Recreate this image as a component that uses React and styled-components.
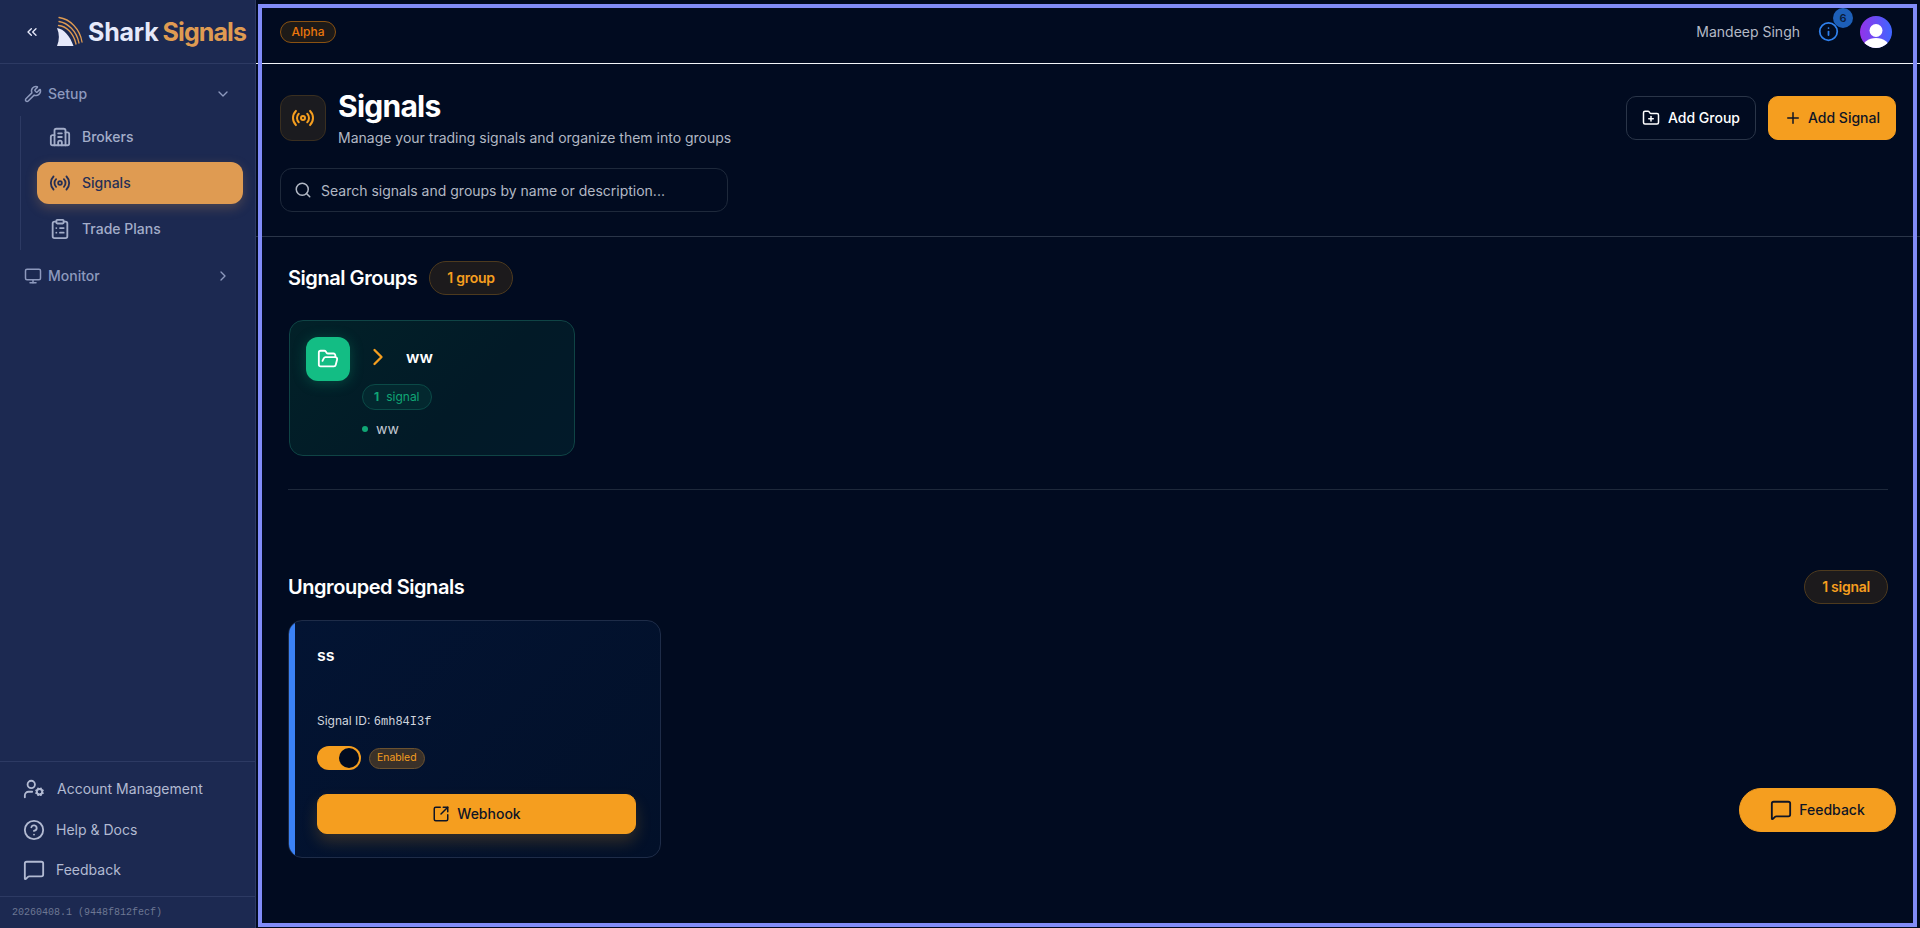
import styled, { createGlobalStyle } from "styled-components";
import {
  Building2,
  ChevronDown,
  ChevronRight,
  ChevronsLeft,
  CircleHelp,
  ClipboardList,
  FolderOpen,
  FolderPlus,
  Info,
  MessageSquare,
  Monitor,
  Plus,
  Radio,
  Search,
  SquareArrowOutUpRight,
  UserCog,
  Wrench,
} from "lucide-react";

const GlobalStyle = createGlobalStyle`
  * { box-sizing: border-box; }
  html, body { margin: 0; height: 100%; }
  body {
    background: #1c2951;
    font-family: Inter, "Liberation Sans", sans-serif;
    line-height: 20px;
    overflow: hidden;
  }
`;

const Shell = styled.div`
  display: flex;
  height: 928px;
  width: 1920px;
  position: relative;
`;

const Sidebar = styled.aside`
  width: 256px;
  flex: none;
  display: flex;
  flex-direction: column;
  background: #1c2951;
  border-right: 1px solid #2d3a63;
`;

const Brand = styled.div`
  height: 64px;
  flex: none;
  display: flex;
  align-items: center;
  padding-left: 24px;
  border-bottom: 1px solid #2d3a63;
  color: #e6e9fa;
  svg.collapse { margin-right: 16px; }
`;

const BrandName = styled.span`
  font-size: 25px;
  font-weight: 700;
  letter-spacing: -0.2px;
  margin-left: 4px;
  color: #e6e9fa;
  span { color: #df9b52; margin-left: 4px; letter-spacing: -0.9px; }
`;

const Nav = styled.nav`
  flex: 1;
  padding-top: 11px;
`;

const NavGroup = styled.div`
  height: 38px;
  display: flex;
  align-items: center;
  padding: 0 24px 0 24px;
  gap: 6px;
  color: #8d99bd;
  font-size: 14px;
  font-weight: 500;
  margin-top: ${(p) => p.$gap || 0}px;
  span { flex: 1; }
`;

const SubList = styled.div`
  margin: 3px 0 0 20px;
  padding: 0 12px 0 16px;
  border-left: 1px solid #2d3a63;
  height: 134px;
  display: flex;
  flex-direction: column;
  gap: 4px;
`;

const SubItem = styled.a`
  height: 42px;
  display: flex;
  align-items: center;
  gap: 11px;
  padding-left: 12px;
  border-radius: 12px;
  font-size: 14px;
  font-weight: 500;
  color: ${(p) => (p.$active ? "#262f55" : "#a3adc9")};
  background: ${(p) => (p.$active ? "#df9b52" : "transparent")};
  box-shadow: ${(p) => (p.$active ? "0 4px 12px rgba(223,155,82,.25)" : "none")};
`;

const FooterNav = styled.div`
  flex: none;
  height: 135px;
  border-top: 1px solid #2d3a63;
  padding-top: 7px;
  display: flex;
  flex-direction: column;
`;

const FooterItem = styled.a`
  height: 40.5px;
  display: flex;
  align-items: center;
  gap: ${(p) => p.$gap || 11}px;
  padding-left: 23px;
  font-size: 14px;
  color: #b2bad2;
`;

const Version = styled.div`
  flex: none;
  height: 32px;
  display: flex;
  align-items: center;
  padding-left: 12px;
  border-top: 1px solid #2d3a63;
  font-family: "Liberation Mono", monospace;
  font-size: 10px;
  color: #6d7793;
`;

const Main = styled.main`
  flex: 1;
  min-width: 0;
  background: #010b20;
  display: flex;
  flex-direction: column;
  position: relative;
`;

const FocusRing = styled.div`
  position: absolute;
  left: 2px;
  top: 4px;
  right: 3px;
  bottom: 1px;
  border: 4px solid #818cf8;
  pointer-events: none;
  z-index: 5;
`;

const TopBar = styled.header`
  height: 64px;
  flex: none;
  display: flex;
  align-items: center;
  justify-content: space-between;
  padding: 0 28px 0 24px;
  border-bottom: 1px solid #f2f4f8;
`;

const AlphaBadge = styled.span`
  font-size: 12px;
  font-weight: 500;
  color: #ea760c;
  padding: 0 10.5px;
  height: 22px;
  display: inline-flex;
  align-items: center;
  border-radius: 999px;
  border: 1px solid #8a5212;
  background: #1d1a18;
`;

const UserBox = styled.div`
  display: flex;
  align-items: center;
  color: #b4bac6;
  font-size: 14px;
`;

const InfoWrap = styled.div`
  position: relative;
  margin: 0 21px 0 18px;
  display: flex;
  color: #2f80ed;
`;

const CountDot = styled.span`
  position: absolute;
  right: -14px;
  top: -13px;
  width: 20px;
  height: 20px;
  border-radius: 50%;
  background: #1d5fb8;
  color: #0b1c3a;
  font-size: 11px;
  font-weight: 600;
  display: flex;
  align-items: center;
  justify-content: center;
`;

const PageHead = styled.section`
  flex: none;
  padding: 31px 24px 24px;
  border-bottom: 1px solid #2a3548;
`;

const HeadRow = styled.div`
  display: flex;
  justify-content: space-between;
  align-items: flex-start;
`;

const TitleBlock = styled.div`
  display: flex;
  gap: 12px;
`;

const IconTile = styled.div`
  width: 46px;
  height: 46px;
  border-radius: 12px;
  display: flex;
  align-items: center;
  justify-content: center;
  color: #f59e1f;
  background: #1b1b1f;
  border: 1px solid #3a2f20;
`;

const Title = styled.h1`
  margin: -7px 0 0;
  font-size: 30px;
  line-height: 36px;
  font-weight: 700;
  color: #fff;
  letter-spacing: -0.75px;
`;

const Subtitle = styled.p`
  margin: 4px 0 0;
  font-size: 14px;
  line-height: 20px;
  color: #b2b8c4;
`;

const Actions = styled.div`
  display: flex;
  gap: 12px;
  padding-top: 1px;
`;

const Button = styled.button`
  height: 44px;
  display: flex;
  align-items: center;
  justify-content: center;
  gap: ${(p) => p.$gap || 7}px;
  padding: 0 15px;
  border-radius: 10px;
  font-family: inherit;
  font-size: 14px;
  line-height: 20px;
  font-weight: 500;
  color: ${(p) => (p.$primary ? "#0e1526" : "#fff")};
  background: ${(p) => (p.$primary ? "#f59e1f" : "transparent")};
  border: 1px solid ${(p) => (p.$primary ? "#f59e1f" : "#2a3548")};
`;

const SearchBox = styled.label`
  width: 448px;
  height: 44px;
  margin-top: 20px;
  display: flex;
  align-items: center;
  gap: 9px;
  padding: 0 13px;
  border: 1px solid #1e293b;
  border-radius: 12px;
  color: #b2b8c4;
  input {
    flex: 1;
    min-width: 0;
    padding: 0;
    border: 0;
    outline: 0;
    background: none;
    font-family: inherit;
    font-size: 14px;
    color: #b2b8c4;
  }
  input::placeholder { color: #b2b8c4; opacity: 1; }
`;

const Content = styled.div`
  flex: 1;
  padding: 24px 32px 0;
`;

const SectionHead = styled.div`
  display: flex;
  align-items: center;
  justify-content: ${(p) => (p.$spread ? "space-between" : "flex-start")};
  gap: 12px;
  margin-top: ${(p) => p.$top || 0}px;
`;

const SectionTitle = styled.h2`
  margin: 0;
  font-size: 20px;
  line-height: 28px;
  font-weight: 600;
  color: #fff;
  letter-spacing: -0.45px;
`;

const CountBadge = styled.span`
  height: 34px;
  padding: 0 17px;
  display: inline-flex;
  align-items: center;
  border-radius: 999px;
  font-size: 14px;
  font-weight: 600;
  letter-spacing: -0.25px;
  color: #f59e1f;
  background: #1c1a1c;
  border: 1px solid #4d3a1e;
`;

const GroupCard = styled.article`
  width: 286px;
  height: 136px;
  margin: 25px 0 0 1px;
  padding: 16px;
  display: flex;
  gap: 12px;
  border-radius: 14px;
  border: 1px solid #0f4445;
  background: linear-gradient(135deg, #022128, #021a27 60%, #021a2a);
`;

const FolderTile = styled.div`
  width: 44px;
  height: 44px;
  flex: none;
  border-radius: 12px;
  display: flex;
  align-items: center;
  justify-content: center;
  color: #fff;
  background: #13bd84;
  box-shadow: 0 2px 14px rgba(19, 189, 132, 0.28);
`;

const GroupBody = styled.div`
  display: flex;
  flex-direction: column;
  align-items: flex-start;
`;

const GroupName = styled.div`
  height: 40px;
  display: flex;
  align-items: center;
  gap: 14px;
  margin-left: 2px;
  color: #f59e1f;
  strong { color: #fff; font-size: 16px; font-weight: 600; }
`;

const SignalCount = styled.span`
  height: 26px;
  padding: 0 11px;
  margin-top: 8px;
  display: inline-flex;
  align-items: center;
  gap: 7px;
  border-radius: 999px;
  font-size: 12px;
  color: #10a675;
  background: #03282f;
  border: 1px solid #0b4a47;
  b { font-weight: 700; }
`;

const MemberRow = styled.div`
  display: flex;
  align-items: center;
  gap: 8px;
  margin-top: 9px;
  font-size: 14px;
  color: #c2c8d2;
  i { width: 6px; height: 6px; border-radius: 50%; background: #10a675; }
`;

const Rule = styled.hr`
  margin: 33px 0 0;
  border: 0;
  border-top: 1px solid #1e293b;
`;

const SignalCard = styled.article`
  width: 373px;
  height: 238px;
  margin-top: 16px;
  padding: 0 23px 0 28px;
  display: flex;
  flex-direction: column;
  align-items: flex-start;
  position: relative;
  overflow: hidden;
  border-radius: 14px;
  border: 1px solid #1e2c48;
  background: linear-gradient(135deg, #031433, #021029);

  &::before {
    content: "";
    position: absolute;
    left: 0;
    top: 0;
    bottom: 0;
    width: 6px;
    background: #3b82f6;
  }
`;

const SignalName = styled.h3`
  margin: 24px 0 0;
  font-size: 16px;
  line-height: 20px;
  font-weight: 600;
  color: #fff;
`;

const SignalMeta = styled.div`
  margin-top: 47px;
  font-size: 12px;
  line-height: 18px;
  color: #d0d5de;
  code { font-family: "Liberation Mono", monospace; font-size: 12px; }
`;

const ToggleRow = styled.div`
  display: flex;
  align-items: center;
  gap: 8px;
  margin-top: 15px;
`;

const Toggle = styled.span`
  width: 44px;
  height: 24px;
  display: flex;
  justify-content: flex-end;
  align-items: center;
  padding: 2px;
  border-radius: 999px;
  background: #f59e1f;
  i { width: 20px; height: 20px; border-radius: 50%; background: #010b20; }
`;

const StatusPill = styled.span`
  height: 21px;
  padding: 0 7px;
  display: inline-flex;
  align-items: center;
  border-radius: 999px;
  font-size: 10.4px;
  color: #f59e1f;
  background: #3a3129;
  border: 1px solid #6b5230;
`;

const WebhookButton = styled(Button)`
  width: 319px;
  height: 40px;
  margin-top: 24px;
  box-shadow: 0 8px 16px rgba(245, 158, 31, 0.2);
`;

const FeedbackFab = styled(Button)`
  position: absolute;
  right: 24px;
  bottom: 96px;
  width: 157px;
  border-radius: 999px;
  z-index: 4;
`;

function SharkMark() {
  return (
    <svg width="28" height="32" viewBox="0 0 28 32" fill="none">
      <path d="M1 12C8 13 14 20 17.5 30H1C3.5 24 3.5 18 1 12Z" fill="#e6e9fa" />
      <g stroke="#df9b52" strokeWidth="1.3" strokeLinecap="round">
        <path d="M3 1.5C14 3 24 13 26 26" />
        <path d="M3 5.5C12 7 20.5 15 23 27" />
        <path d="M2.5 9.5C10 10 17.5 17 20 28" />
      </g>
    </svg>
  );
}

function Avatar() {
  return (
    <svg width="32" height="32" viewBox="0 0 32 32">
      <defs>
        <linearGradient id="avatarFill" x1="0" y1="0.5" x2="1" y2="0.5">
          <stop offset="0" stopColor="#9333ea" />
          <stop offset="1" stopColor="#3f66ff" />
        </linearGradient>
        <clipPath id="avatarClip">
          <circle cx="16" cy="16" r="16" />
        </clipPath>
      </defs>
      <g clipPath="url(#avatarClip)">
        <rect width="32" height="32" fill="url(#avatarFill)" />
        <circle cx="16" cy="14.5" r="6.5" fill="#fff" />
        <ellipse cx="16" cy="33" rx="14" ry="11" fill="#fff" />
      </g>
    </svg>
  );
}

export default function App() {
  return (
    <>
      <GlobalStyle />
      <Shell>
        <Sidebar>
          <Brand>
            <ChevronsLeft className="collapse" size={16} />
            <SharkMark />
            <BrandName>
              Shark<span>Signals</span>
            </BrandName>
          </Brand>

          <Nav>
            <NavGroup>
              <Wrench size={18} />
              <span>Setup</span>
              <ChevronDown size={16} />
            </NavGroup>
            <SubList>
              <SubItem>
                <Building2 size={22} />
                Brokers
              </SubItem>
              <SubItem $active>
                <Radio size={22} />
                Signals
              </SubItem>
              <SubItem>
                <ClipboardList size={22} />
                Trade Plans
              </SubItem>
            </SubList>
            <NavGroup $gap={7}>
              <Monitor size={18} />
              <span>Monitor</span>
              <ChevronRight size={16} />
            </NavGroup>
          </Nav>

          <FooterNav>
            <FooterItem $gap={12}>
              <UserCog size={22} />
              Account Management
            </FooterItem>
            <FooterItem>
              <CircleHelp size={22} />
              Help &amp; Docs
            </FooterItem>
            <FooterItem>
              <MessageSquare size={22} />
              Feedback
            </FooterItem>
          </FooterNav>
          <Version>20260408.1 (9448f812fecf)</Version>
        </Sidebar>

        <Main>
          <TopBar>
            <AlphaBadge>Alpha</AlphaBadge>
            <UserBox>
              Mandeep Singh
              <InfoWrap>
                <Info size={21} />
                <CountDot>6</CountDot>
              </InfoWrap>
              <Avatar />
            </UserBox>
          </TopBar>

          <PageHead>
            <HeadRow>
              <TitleBlock>
                <IconTile>
                  <Radio size={24} />
                </IconTile>
                <div>
                  <Title>Signals</Title>
                  <Subtitle>Manage your trading signals and organize them into groups</Subtitle>
                </div>
              </TitleBlock>
              <Actions>
                <Button $gap={8}>
                  <FolderPlus size={18} />
                  Add Group
                </Button>
                <Button $primary $gap={6}>
                  <Plus size={18} />
                  Add Signal
                </Button>
              </Actions>
            </HeadRow>
            <SearchBox>
              <Search size={18} />
              <input placeholder="Search signals and groups by name or description..." />
            </SearchBox>
          </PageHead>

          <Content>
            <SectionHead>
              <SectionTitle>Signal Groups</SectionTitle>
              <CountBadge>1 group</CountBadge>
            </SectionHead>
            <GroupCard>
              <FolderTile>
                <FolderOpen size={22} />
              </FolderTile>
              <GroupBody>
                <GroupName>
                  <ChevronRight size={28} />
                  <strong>ww</strong>
                </GroupName>
                <SignalCount>
                  <b>1</b> signal
                </SignalCount>
                <MemberRow>
                  <i />
                  ww
                </MemberRow>
              </GroupBody>
            </GroupCard>
            <Rule />

            <SectionHead $spread $top={80}>
              <SectionTitle>Ungrouped Signals</SectionTitle>
              <CountBadge>1 signal</CountBadge>
            </SectionHead>
            <SignalCard>
              <SignalName>ss</SignalName>
              <SignalMeta>
                Signal ID: <code>6mh84I3f</code>
              </SignalMeta>
              <ToggleRow>
                <Toggle>
                  <i />
                </Toggle>
                <StatusPill>Enabled</StatusPill>
              </ToggleRow>
              <WebhookButton $primary>
                <SquareArrowOutUpRight size={18} />
                Webhook
              </WebhookButton>
            </SignalCard>
          </Content>

          <FeedbackFab $primary>
            <MessageSquare size={22} />
            Feedback
          </FeedbackFab>
          <FocusRing />
        </Main>
      </Shell>
    </>
  );
}
